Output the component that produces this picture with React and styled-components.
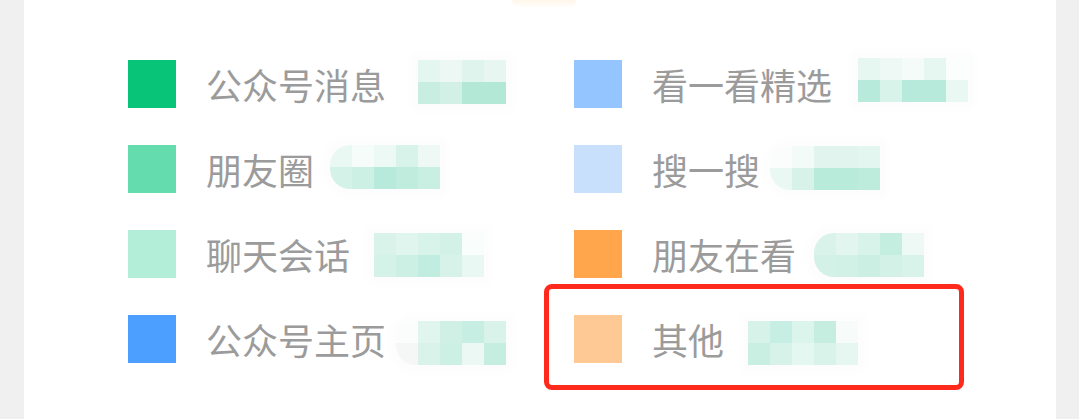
import React from "react";
import styled, { createGlobalStyle } from "styled-components";

const Global = createGlobalStyle`
  html, body { margin: 0; padding: 0; background: #f0f0f0; }
  body { font-family: "Noto Sans CJK SC", "Noto Sans", sans-serif; }
`;

const Page = styled.div`
  width: 1079px;
  height: 419px;
  overflow: hidden;
  background: #f0f0f0;
`;

const Card = styled.div`
  margin-left: 24px;
  width: 1032px;
  height: 419px;
  background: #fff;
  display: flex;
  flex-direction: column;
`;

const ChartStub = styled.div`
  align-self: center;
  margin-left: 8px;
  width: 64px;
  height: 8px;
  border-radius: 0 0 32px 32px;
  background: linear-gradient(#fff6ea, #fffbf5 60%, #ffffff);
`;

const Legend = styled.div`
  display: grid;
  grid-template-columns: 446px 1fr;
  row-gap: 37px;
  padding: 52px 0 0 104px;
`;

const Item = styled.div`
  position: relative;
  display: flex;
  align-items: flex-start;
  height: 48px;
`;

const Swatch = styled.div`
  width: 48px;
  height: 48px;
  flex: none;
  background: ${(p) => p.$color};
`;

const Label = styled.span`
  margin-left: 30px;
  font-size: 36px;
  line-height: 48px;
  color: #9b9b9b;
  white-space: nowrap;
`;

const Mosaic = styled.div`
  margin-left: ${(p) => p.$gap}px;
  margin-top: ${(p) => p.$dy}px;
  display: grid;
  grid-template-columns: repeat(${(p) => p.$cols}, 22px);
  grid-auto-rows: 22px;
  border-radius: ${(p) => (p.$round ? "20px 0 0 20px" : "0")};
  overflow: hidden;
  box-shadow: 0 0 10px 8px rgba(0, 0, 0, 0.012);
`;

const Cell = styled.div`
  background: ${(p) => p.$c};
`;

const Highlight = styled.div`
  position: absolute;
  left: -30px;
  top: -31px;
  width: 420px;
  height: 106px;
  box-sizing: border-box;
  border: 5px solid #ff2a1c;
  border-radius: 8px;
  pointer-events: none;
`;

const items = [
  { label: "公众号消息", color: "#08c479", gap: 32, dy: 0, top: ["#e3f6ef", "#edf8f4", "#dff4ec", "#e8f6f1"], bottom: ["#c8eee1", "#d3f0e7", "#b3e8d7", "#b3e8d7"] },
  { label: "看一看精选", color: "#94c5fe", gap: 26, dy: -2, top: ["#e6f7f1", "#eef9f5", "#f4fbf8", "#e6f7f1", "#fbfefd"], bottom: ["#b8eadb", "#d8f3ea", "#b8eadb", "#b8eadb", "#eaf8f3"] },
  { label: "朋友圈", color: "#65dcae", gap: 16, dy: 0, round: true, top: ["#e9f8f3", "#f6fcfa", "#ecf9f4", "#d8f3ea", "#eef9f5"], bottom: ["#d5f2e8", "#ccf0e3", "#b8eadb", "#bfecdd", "#c9efe2"] },
  { label: "搜一搜", color: "#c9e0fd", gap: 10, dy: 1, round: true, top: ["#fafdfc", "#f2fbf7", "#e1f5ee", "#e1f5ee", "#e4f6f0"], bottom: ["#e9f8f3", "#d6f2e9", "#b9ebdb", "#b9ebdb", "#bdebdc"] },
  { label: "聊天会话", color: "#b3eed8", gap: 24, dy: 3, top: ["#d9f3ea", "#e0f5ee", "#d7f3ea", "#d3f1e7", "#f9fdfb"], bottom: ["#d5f2e8", "#cdf0e4", "#c1ede0", "#d6f2e9", "#e9f8f3"] },
  { label: "朋友在看", color: "#ffa64d", gap: 18, dy: 3, round: true, top: ["#d9f3ea", "#e2f6ef", "#d7f3ea", "#c3eee0", "#eef9f5"], bottom: ["#d3f1e7", "#d1f1e6", "#ccefe3", "#d3f1e7", "#d8f3ea"] },
  { label: "公众号主页", color: "#4c9ffe", gap: 10, dy: 6, round: true, top: ["#fbfcfc", "#e0f5ed", "#d0f0e6", "#c7eee2", "#d9f3ea"], bottom: ["#f5f6f6", "#d9f3ea", "#cdf0e4", "#ebf8f4", "#c5eee1"] },
  { label: "其他", color: "#ffc995", gap: 24, dy: 6, highlight: true, top: ["#d6f2e9", "#c7eee2", "#dbf4ec", "#c5eee1", "#f7fcfb"], bottom: ["#c9efe2", "#d6f2e9", "#e5f7f1", "#d9f3ea", "#e6f7f1"] },
];

export default function App() {
  return (
    <Page>
      <Global />
      <Card>
        <ChartStub />
        <Legend>
          {items.map((it) => (
            <Item key={it.label}>
              <Swatch $color={it.color} />
              <Label>{it.label}</Label>
              <Mosaic $gap={it.gap} $dy={it.dy} $cols={it.top.length} $round={it.round}>
                {[...it.top, ...it.bottom].map((c, i) => (
                  <Cell key={i} $c={c} />
                ))}
              </Mosaic>
              {it.highlight && <Highlight />}
            </Item>
          ))}
        </Legend>
      </Card>
    </Page>
  );
}
